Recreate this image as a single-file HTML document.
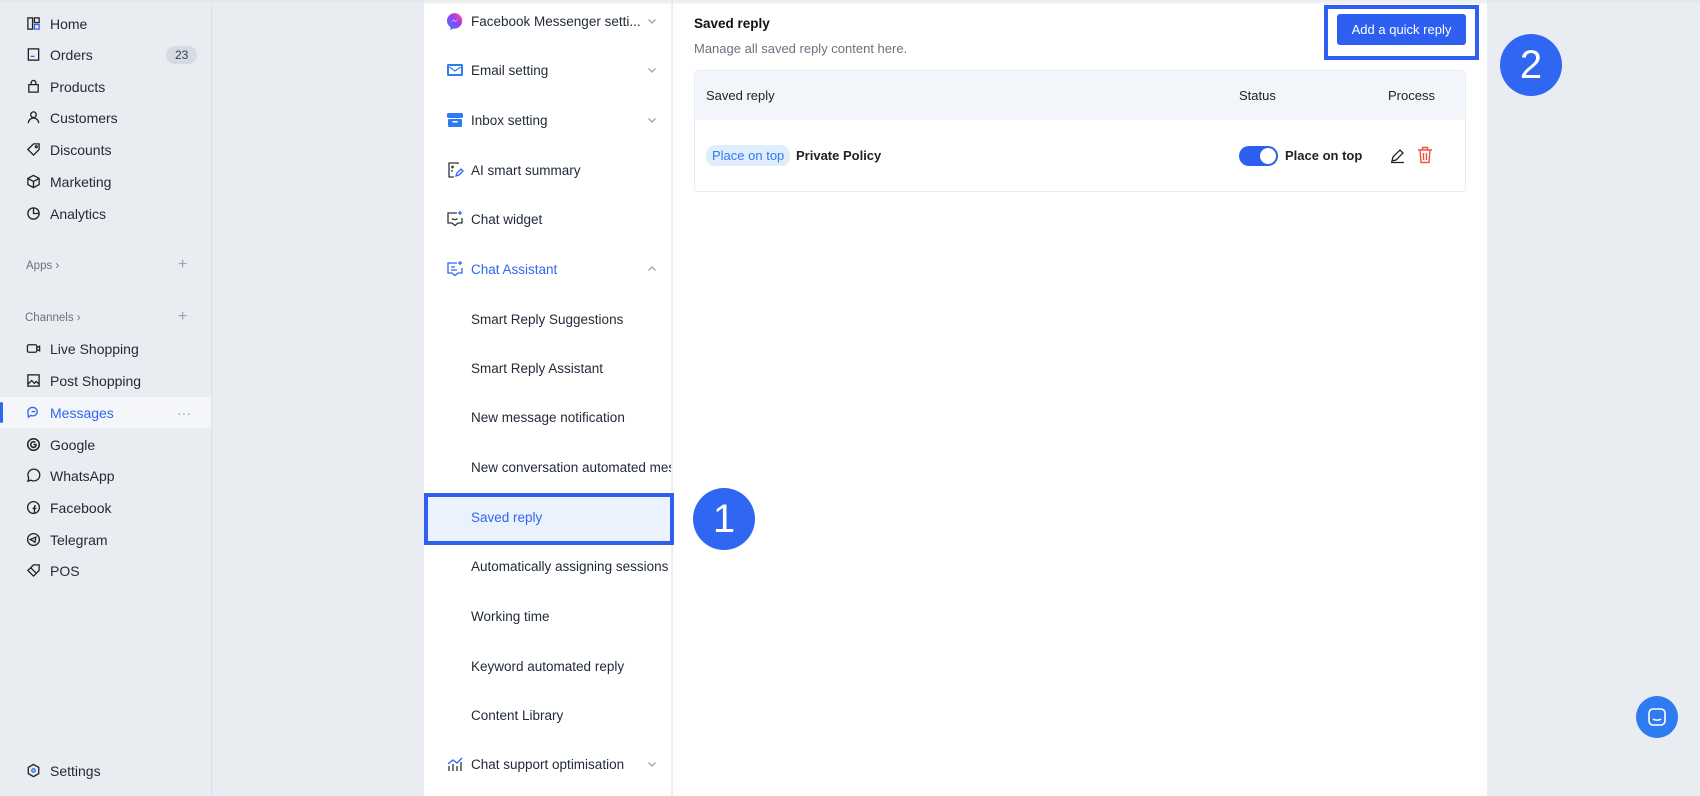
<!DOCTYPE html>
<html><head><meta charset="utf-8"><style>
*{box-sizing:border-box;margin:0;padding:0}
body{width:1700px;height:796px;overflow:hidden;background:#e9ecf1;font-family:"Liberation Sans",Arial,sans-serif;color:#1f2937;position:relative}
.abs{position:absolute}
.sb{left:0;top:0;width:212px;height:796px;background:#e9ecf1;border-right:1px solid #dde1e7}
.si{position:absolute;left:0;width:211px;height:31px;font-size:14px;display:flex;align-items:center;padding-left:26px;color:#1f2937}
.si svg{width:15px;height:15px;margin-right:9px;flex:none}
.sec{position:absolute;left:26px;font-size:11.5px;color:#6b7280}
.plus{position:absolute;left:178px;font-size:16px;color:#9ca3af}
.mid{left:424px;top:0;width:248px;height:796px;background:#fff;border-right:1px solid #eceff3;overflow:hidden}
.mi{position:absolute;left:0;width:248px;height:46px;display:flex;align-items:center;font-size:13.5px;color:#1f2937}
.mi .ic{position:absolute;left:22px;width:18px;height:18px}
.mi .t{position:absolute;left:47px;white-space:nowrap}
.mi .ch{position:absolute;left:223px;width:10px;height:10px}
.right{left:673px;top:0;width:814px;height:796px;background:#fff}
.circ{border-radius:50%;background:#2f66f2;color:#fff;font-size:40px;display:flex;align-items:center;justify-content:center;width:62px;height:62px;z-index:10}
</style></head><body>
<div class="abs" style="left:0;top:0;width:1700px;height:4px;background:linear-gradient(#dde1e6,#e9ecf1);z-index:5;opacity:.6"></div>
<div class="abs sb">
<div class="si" style="top:8px"><svg viewBox="0 0 16 16" fill="none" stroke="#222" stroke-width="1.4"><rect x="2" y="2" width="5" height="12"/><rect x="9" y="2" width="5" height="5"/><rect x="9" y="9" width="5" height="5" stroke="#2f66f2"/></svg>Home</div>
<div class="si" style="top:39px"><svg viewBox="0 0 16 16" fill="none" stroke="#222" stroke-width="1.4"><rect x="2.5" y="2" width="11" height="12"/><path d="M5 10h4" stroke="#2f66f2"/></svg>Orders<span style="position:absolute;left:166px;background:#d5dae3;border-radius:9px;font-size:12px;padding:2px 9px;color:#374151">23</span></div>
<div class="si" style="top:71px"><svg viewBox="0 0 16 16" fill="none" stroke="#222" stroke-width="1.4"><path d="M3 6h10v8H3z M5.5 6V4a2.5 2.5 0 015 0v2"/></svg>Products</div>
<div class="si" style="top:102px"><svg viewBox="0 0 16 16" fill="none" stroke="#222" stroke-width="1.4"><circle cx="8" cy="5" r="3"/><path d="M2.5 14a5.5 5.5 0 0111 0"/></svg>Customers</div>
<div class="si" style="top:134px"><svg viewBox="0 0 16 16" fill="none" stroke="#222" stroke-width="1.4"><path d="M2 8l6-6h6v6l-6 6z"/><circle cx="11" cy="5" r="1"/></svg>Discounts</div>
<div class="si" style="top:166px"><svg viewBox="0 0 16 16" fill="none" stroke="#222" stroke-width="1.4"><path d="M8 1.5l6 3.2v6.6L8 14.5l-6-3.2V4.7z M2 4.7l6 3.3 6-3.3 M8 8v6.5"/></svg>Marketing</div>
<div class="si" style="top:198px"><svg viewBox="0 0 16 16" fill="none" stroke="#222" stroke-width="1.4"><circle cx="8" cy="8" r="6"/><path d="M8 2v6h6" /></svg>Analytics</div>
<div class="sec" style="top:260px">Apps ›</div><div class="plus" style="top:256px">+</div>
<div class="sec" style="top:312px;left:25px">Channels ›</div><div class="plus" style="top:308px">+</div>
<div class="si" style="top:333px"><svg viewBox="0 0 16 16" fill="none" stroke="#222" stroke-width="1.4"><rect x="1.5" y="4" width="10" height="8" rx="1.5"/><path d="M11.5 7l3-1.5v5l-3-1.5"/></svg>Live Shopping</div>
<div class="si" style="top:365px"><svg viewBox="0 0 16 16" fill="none" stroke="#222" stroke-width="1.4"><rect x="2" y="2" width="12" height="12"/><path d="M2 12l4-4 3 3 2-2 3 3"/></svg>Post Shopping</div>
<div class="si" style="top:397px;background:#f4f6f9;color:#2f66f2"><span style="position:absolute;left:0;top:5px;width:3px;height:21px;background:#2f66f2;border-radius:2px"></span><svg viewBox="0 0 16 16" fill="none" stroke="#2f66f2" stroke-width="1.4"><path d="M2 7a5 4.5 0 1 1 3 4.2L2.5 13z"/><path d="M6 7h4"/></svg>Messages<span style="position:absolute;left:177px;color:#9ca3af">···</span></div>
<div class="si" style="top:429px"><svg viewBox="0 0 16 16" fill="none" stroke="#222" stroke-width="1.6"><circle cx="8" cy="8" r="6.2"/><path d="M11 8H8 M11 8a3 3 0 1 1-1-2.2"/></svg>Google</div>
<div class="si" style="top:460px"><svg viewBox="0 0 16 16" fill="none" stroke="#222" stroke-width="1.4"><path d="M2 14l1-3.2A6.3 6.3 0 1 1 5.3 13z"/></svg>WhatsApp</div>
<div class="si" style="top:492px"><svg viewBox="0 0 16 16" fill="none" stroke="#222" stroke-width="1.4"><circle cx="8" cy="8" r="6.3"/><path d="M9 14V7.5c0-1 .5-1.5 1.5-1.5 M7 9h4"/></svg>Facebook</div>
<div class="si" style="top:524px"><svg viewBox="0 0 16 16" fill="none" stroke="#222" stroke-width="1.4"><circle cx="8" cy="8" r="6.3"/><path d="M4.5 8l6-2.5-1 5.5-2-1.5z"/></svg>Telegram</div>
<div class="si" style="top:555px"><svg viewBox="0 0 16 16" fill="none" stroke="#222" stroke-width="1.4"><path d="M2 8l6-6h6v6l-6 6z M5 5l6 6"/></svg>POS</div>
<div class="si" style="top:755px"><svg viewBox="0 0 16 16" fill="none" stroke="#222" stroke-width="1.4"><path d="M8 1.5l5.6 3.2v6.6L8 14.5l-5.6-3.2V4.7z"/><circle cx="8" cy="8" r="1.8" stroke="#2f66f2"/></svg>Settings</div>
</div>

<div class="abs mid">
<div class="mi" style="top:-2px"><svg class="ic" viewBox="0 0 18 18"><defs><linearGradient id="g" x1="0" y1="1" x2="1" y2="0"><stop offset="0" stop-color="#2b7bff"/><stop offset=".6" stop-color="#a33cf0"/><stop offset="1" stop-color="#ff5c7a"/></linearGradient></defs><path d="M9 1a8 7.7 0 0 0-4.5 14.1V18l2.6-1.4A8 7.7 0 1 0 9 1z" fill="url(#g)"/><path d="M4 11l3.5-3.5 2 1.8L13 6l-3.5 4-2-1.8z" fill="#fff"/></svg><span class="t">Facebook Messenger setti...</span><svg class="ch" viewBox="0 0 10 10" fill="none" stroke="#9ca3af" stroke-width="1.3"><path d="M1.5 3.5L5 7l3.5-3.5"/></svg></div>
<div class="mi" style="top:47px"><svg class="ic" viewBox="0 0 18 18"><rect x="1" y="3" width="16" height="12" rx="1.5" fill="#2f7bf2"/><rect x="3" y="5" width="12" height="8" fill="#fff"/><path d="M3.5 6l5.5 4 5.5-4" stroke="#2f7bf2" stroke-width="1.3" fill="none"/></svg><span class="t">Email setting</span><svg class="ch" viewBox="0 0 10 10" fill="none" stroke="#9ca3af" stroke-width="1.3"><path d="M1.5 3.5L5 7l3.5-3.5"/></svg></div>
<div class="mi" style="top:97px"><svg class="ic" viewBox="0 0 18 18"><rect x="1" y="2" width="16" height="5" rx="1.5" fill="#2f7bf2"/><rect x="2" y="8" width="14" height="8" rx="1" fill="#2f7bf2"/><rect x="6.5" y="10" width="5" height="1.5" fill="#fff"/></svg><span class="t">Inbox setting</span><svg class="ch" viewBox="0 0 10 10" fill="none" stroke="#9ca3af" stroke-width="1.3"><path d="M1.5 3.5L5 7l3.5-3.5"/></svg></div>
<div class="mi" style="top:147px"><svg class="ic" viewBox="0 0 18 18" fill="none" stroke="#333" stroke-width="1.3"><path d="M12 3V2H3v14h5"/><path d="M5 6h3 M6.5 4.5v3 M5 10h2"/><path d="M10 15l1-3 4-4 2 2-4 4z" stroke="#2f66f2"/></svg><span class="t">AI smart summary</span></div>
<div class="mi" style="top:196px"><svg class="ic" viewBox="0 0 18 18" fill="none" stroke="#333" stroke-width="1.3"><path d="M11 3H2v10h4l3 2.5 3-2.5h4V8"/><path d="M6 8.5c1.5 1.5 4 1.5 5.5 0"/><path d="M14 1v4 M12 3h4" stroke="#2f66f2"/></svg><span class="t">Chat widget</span></div>
<div class="mi" style="top:246px;color:#2f66f2"><svg class="ic" viewBox="0 0 18 18" fill="none" stroke="#2f66f2" stroke-width="1.3"><path d="M11 3H2v10h4l3 2.5 3-2.5h4V8"/><path d="M5 7h4 M5 10h6"/><path d="M14 1v4 M12 3h4"/></svg><span class="t">Chat Assistant</span><svg class="ch" viewBox="0 0 10 10" fill="none" stroke="#9ca3af" stroke-width="1.3"><path d="M1.5 6.5L5 3l3.5 3.5"/></svg></div>
<div class="mi" style="top:296px"><span class="t">Smart Reply Suggestions</span></div>
<div class="mi" style="top:345px"><span class="t">Smart Reply Assistant</span></div>
<div class="mi" style="top:394px"><span class="t">New message notification</span></div>
<div class="mi" style="top:444px"><span class="t">New conversation automated messages</span></div>
<div class="mi" style="top:543px"><span class="t">Automatically assigning sessions</span></div>
<div class="mi" style="top:593px"><span class="t">Working time</span></div>
<div class="mi" style="top:643px"><span class="t">Keyword automated reply</span></div>
<div class="mi" style="top:692px"><span class="t">Content Library</span></div>
<div class="mi" style="top:741px"><svg class="ic" viewBox="0 0 18 18" fill="none" stroke="#333" stroke-width="1.3"><path d="M3 16V11 M7 16V9 M11 16v-5 M15 16V7"/><path d="M2 9l5-4 4 3 5-5" stroke="#2f66f2"/></svg><span class="t">Chat support optimisation</span><svg class="ch" viewBox="0 0 10 10" fill="none" stroke="#9ca3af" stroke-width="1.3"><path d="M1.5 3.5L5 7l3.5-3.5"/></svg></div>
</div>
<div class="abs" style="left:424px;top:493px;width:250px;height:52px;border:4px solid #2f5ff0;background:#ebf2fd;font-size:13.5px;color:#2f66f2;padding:13px 0 0 43px;z-index:3">Saved reply</div>

<div class="abs right">
<div class="abs" style="left:21px;top:16px;font-size:13.5px;font-weight:bold;color:#111">Saved reply</div>
<div class="abs" style="left:21px;top:41px;font-size:13px;color:#6b7280">Manage all saved reply content here.</div>
<div class="abs" style="left:651px;top:5px;width:155px;height:55px;border:4px solid #2f5ff0;background:#fff"></div>
<div class="abs" style="left:664px;top:14px;width:129px;height:31px;background:#2f5ff0;border-radius:3px;color:#fff;font-size:13px;display:flex;align-items:center;justify-content:center">Add a quick reply</div>
<div class="abs" style="left:21px;top:70px;width:772px;height:122px;border:1px solid #e8ebf0;border-radius:4px;overflow:hidden">
<div style="height:49px;background:#f2f5f9;position:relative;font-size:13px;color:#222">
<span class="abs" style="left:11px;top:17px">Saved reply</span>
<span class="abs" style="left:544px;top:17px">Status</span>
<span class="abs" style="left:693px;top:17px">Process</span></div>
<div style="position:relative;height:72px">
<span class="abs" style="left:11px;top:25px;background:#e0edfd;color:#2f7bf2;font-size:13px;padding:3px 6px;border-radius:9px">Place on top</span>
<span class="abs" style="left:101px;top:28px;font-size:13px;font-weight:bold;color:#222">Private Policy</span>
<span class="abs" style="left:544px;top:26px;width:39px;height:20px;border-radius:10px;background:#2f5ff0"><span class="abs" style="left:21px;top:2px;width:16px;height:16px;border-radius:50%;background:#fff"></span></span>
<span class="abs" style="left:590px;top:28px;font-size:13px;font-weight:bold;color:#222">Place on top</span>
<svg class="abs" style="left:694px;top:27px" width="17" height="17" viewBox="0 0 17 17" fill="none" stroke="#222" stroke-width="1.3"><path d="M3 14l1-4 7-7 3 3-7 7z M2 15.5h13"/></svg>
<svg class="abs" style="left:722px;top:26px" width="16" height="18" viewBox="0 0 16 18" fill="none" stroke="#f0533c" stroke-width="1.4"><path d="M1 4h14 M5.5 4V1.5h5V4 M3 4l1 12.5h8L13 4 M6.5 7v7 M9.5 7v7"/></svg>
</div></div>
</div>
<div class="abs circ" style="left:693px;top:488px">1</div>
<div class="abs circ" style="left:1500px;top:34px">2</div>
<div class="abs" style="left:1636px;top:696px;width:42px;height:42px;border-radius:50%;background:#2f7bf2;display:flex;align-items:center;justify-content:center"><svg width="20" height="20" viewBox="0 0 20 20" fill="none" stroke="#fff" stroke-width="1.6"><rect x="2" y="2" width="16" height="16" rx="4"/><path d="M6 12c2 1.5 6 1.5 8 0"/></svg></div>
</body></html>
